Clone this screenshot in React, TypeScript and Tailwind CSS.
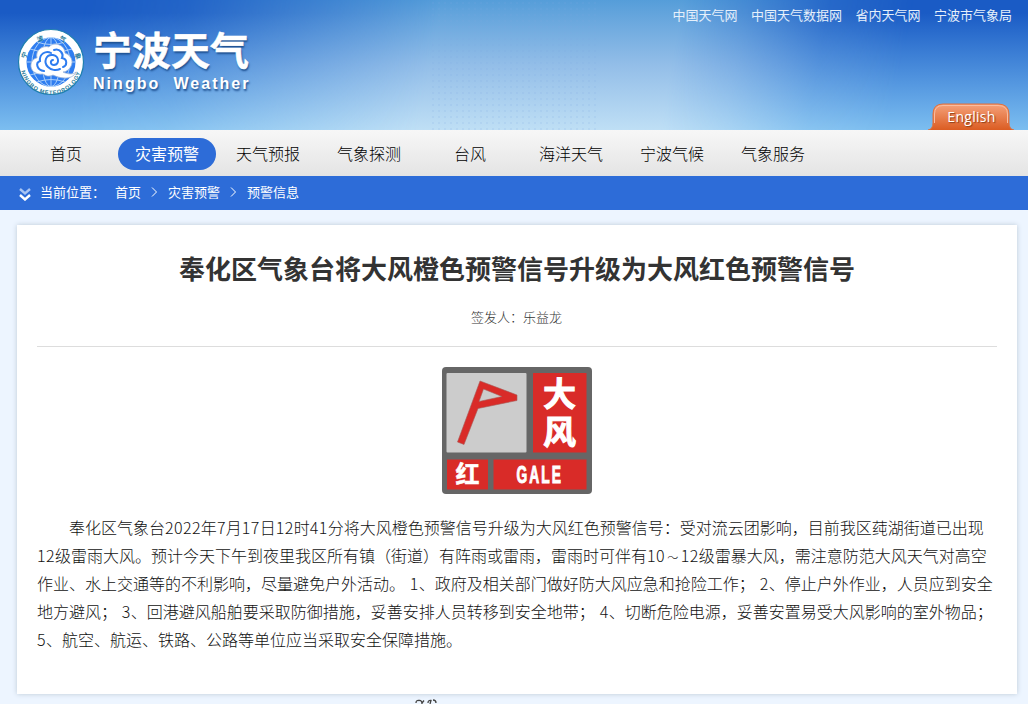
const topLinks = [
  { label: '中国天气网', href: '#' },
  { label: '中国天气数据网', href: '#' },
  { label: '省内天气网', href: '#' },
  { label: '宁波市气象局', href: '#' },
];

const navItems = [
  { label: '首页' },
  { label: '灾害预警', active: true },
  { label: '天气预报' },
  { label: '气象探测' },
  { label: '台风' },
  { label: '海洋天气' },
  { label: '宁波气候' },
  { label: '气象服务' },
];

const crumbs = ['首页', '灾害预警', '预警信息'];

const lines = [
  '奉化区气象台2022年7月17日12时41分将大风橙色预警信号升级为大风红色预警信号：受对流云团影响，目前我区莼湖街道已出现',
  '12级雷雨大风。预计今天下午到夜里我区所有镇（街道）有阵雨或雷雨，雷雨时可伴有10～12级雷暴大风，需注意防范大风天气对高空',
  '作业、水上交通等的不利影响，尽量避免户外活动。 1、政府及相关部门做好防大风应急和抢险工作； 2、停止户外作业，人员应到安全',
  '地方避风； 3、回港避风船舶要采取防御措施，妥善安排人员转移到安全地带； 4、切断危险电源，妥善安置易受大风影响的室外物品；',
  '5、航空、航运、铁路、公路等单位应当采取安全保障措施。',
];

function Logo() {
  return (
    <svg width="68" height="68" viewBox="0 0 68 68">
      <defs>
        <path id="ringTop" d="M8 37 A26 26 0 1 1 60 37" />
        <path id="ringBottom" d="M3.500 36 A30.500 30.500 0 0 0 64.500 36" />
      </defs>
      <circle cx="34" cy="34" r="32.5" fill="#fff" stroke="#1f7fae" strokeWidth="1.2" />
      <circle cx="34" cy="34" r="24.5" fill="#2f7df0" />
      <g fill="none" stroke="#b9d8fb" strokeWidth="0.9">
        <ellipse cx="34" cy="34" rx="9" ry="24.5" />
        <ellipse cx="34" cy="34" rx="19" ry="24.5" />
        <path d="M34 9.500v49M9.500 34h49M13 21q21 7 42 0M13 47q21-7 42 0M20 14q14 5 28 0M20 54q14-5 28 0" />
      </g>
      {/* cloud */}
      <path
        d="M26 46 C18 47 13 42 14 36 C15 32 18 30 20 30 C18 22 26 17 32 19 C37 13 48 17 48 25 C56 28 57 36 52 41 C50 43 48 44 46 44 C50 46 56 47 59 44 C55 53 42 50 36 47 C32 49 29 48 26 46Z"
        fill="#fff"
        stroke="#9db4d8"
        strokeWidth="0.8"
      />
      <path
        d="M36 32 C33 32 33 37 37 37 C43 36 42 28 36 27 C29 26 26 34 31 39 C34 42 39 43 43 41 M27 43 C20 42 18 35 23 33 C22 26 29 22 34 25 M37 22 C43 20 47 26 45 30 C51 31 50 38 46 39"
        fill="none"
        stroke="#2f7df0"
        strokeWidth="2"
        strokeLinecap="round"
      />
      <text fontSize="6.5" fontWeight="700" fill="#1c7898" fontFamily="'Noto Sans CJK SC', sans-serif">
        <textPath href="#ringTop" startOffset="6" textLength="70">
          宁 波 气 象
        </textPath>
      </text>
      <text fontSize="5.500" fontWeight="700" fill="#1c7898" fontFamily="'Liberation Sans', sans-serif">
        <textPath href="#ringBottom" startOffset="7" textLength="80">
          NINGBO METEOROLOGY
        </textPath>
      </text>
    </svg>
  );
}

function GaleSign() {
  return (
    <svg width="150" height="127" viewBox="0 0 150 127">
      <rect width="150" height="127" rx="4" fill="#666" />
      <rect x="4.500" y="6" width="80" height="79.500" rx="1" fill="#ccc" />
      <rect x="91" y="6" width="53.500" height="79.500" fill="#d92b28" />
      <rect x="5" y="92.500" width="41" height="30" fill="#d92b28" />
      <rect x="51.500" y="92.500" width="93" height="30" fill="#d92b28" />
      <path
        fillRule="evenodd"
        fill="#d92b28"
        stroke="#a85a58"
        strokeWidth="0.6"
        d="M38 14 L75 28 V33.500 L36 41.500 L22 77.500 L15.500 75 Z M41.500 22 L37 34.500 L60 29.500 Z"
      />
      <g
        fill="#fff"
        stroke="#fff"
        strokeWidth="1"
        fontFamily="'Noto Sans CJK SC', sans-serif"
        fontWeight="700"
        textAnchor="middle"
      >
        <text x="117.500" y="39" fontSize="33">大</text>
        <text x="117.500" y="77" fontSize="33">风</text>
        <text x="25.500" y="116" fontSize="24" strokeWidth="0.5">红</text>
      </g>
      <text
        x="74"
        y="116"
        fontSize="23"
        fontWeight="700"
        fill="#fff"
        stroke="#fff"
        strokeWidth="1"
        fontFamily="'Liberation Sans', sans-serif"
        transform="translate(75 0) scale(0.6 1) translate(-75 0)"
        letterSpacing="3.500"
      >
        GALE
      </text>
    </svg>
  );
}

function Header() {
  return (
    <header className="relative h-[130px] bg-linear-to-b from-[#1a5bc5] from-10% to-[#7cbef0]">
      <div className="absolute inset-0 bg-linear-to-b from-[#559dd9] via-[#93bee8] to-[#bfdff5] [mask-image:linear-gradient(100deg,transparent_8%,rgba(0,0,0,0.15)_18%,rgba(0,0,0,0.5)_28%,#000_42%,#000_65%,rgba(0,0,0,0.7)_71%,rgba(0,0,0,0.2)_79%,transparent_87%)]" />
      <div className="absolute inset-y-0 left-[430px] w-[170px] bg-[radial-gradient(#7ba6e0_1px,transparent_1.5px)] bg-[size:6px_6px] opacity-15" />
      <div className="relative flex h-full justify-between">
        <div className="flex pt-7 pl-[17px]">
          <Logo />
          <div className="ml-2 text-white [text-shadow:1px_2px_2px_#1d4f8f]">
            <h1 className="-mt-[3px] h-[50px] text-[39px] leading-[46px] font-bold whitespace-nowrap [-webkit-text-stroke:0.5px_white]">
              宁波天气
            </h1>
            <p className="font-['Liberation_Sans'] text-[16px] leading-[18px] font-bold tracking-[2.05px] whitespace-pre">
              Ningbo  Weather
            </p>
          </div>
        </div>
        <div className="flex flex-col items-end justify-between">
          <ul className="flex gap-[13.5px] pt-[5px] pr-4 text-[13px] leading-5 text-[#e6f0fb]">
            {topLinks.map(link => (
              <li key={link.label}>
                <a href={link.href}>{link.label}</a>
              </li>
            ))}
          </ul>
          <a href="#" className="relative mr-[14px] block h-[27px] w-[86px]">
            <svg width="86" height="27" viewBox="0 0 86 27" className="absolute inset-0">
              <defs>
                <linearGradient id="tab" x1="0" y1="0" x2="0" y2="1">
                  <stop offset="0" stopColor="#f5a27b" />
                  <stop offset="1" stopColor="#db5c22" />
                </linearGradient>
              </defs>
              <path d="M0 27 Q5 26 5 20 V11 Q5 1 15 1 H70 Q81 1 81 11 V20 Q81 26 86 27Z" fill="url(#tab)" />
              <path d="M0 27 Q5 26 5 20 V11 Q5 1 15 1 H70 Q81 1 81 11 V20 Q81 26 86 27" fill="none" stroke="#e0703c" />
              <path d="M6.500 20 V11 Q6.500 2.500 15 2.500 H70 Q79.500 2.500 79.500 11 V20" fill="none" stroke="#f9bd9f" />
            </svg>
            <span className="relative block pl-px text-center font-['Open_Sans'] text-[14px] leading-[27px] tracking-[0.3px] text-white [text-shadow:1px_1px_1px_#8c3c16]">
              English
            </span>
          </a>
        </div>
      </div>
    </header>
  );
}

// digits get a little extra tracking, the wave dash is drawn small
function BodyLine({ text }: { text: string }) {
  return (
    <>
      {text.split(/(\d+|～)/).map((part, idx) => {
        if (part === '～') {
          return (
            <span key={idx} className="inline-block w-4 text-center text-[11px] leading-4">
              {part}
            </span>
          );
        }
        return /^\d/.test(part) ? (
          <span key={idx} className="tracking-[0.4px]">
            {part}
          </span>
        ) : (
          part
        );
      })}
    </>
  );
}

export default function App() {
  return (
    <div
      lang="zh-CN"
      className="h-[704px] w-[1028px] overflow-hidden bg-[#edf5ff] font-['Noto_Sans_CJK_SC',sans-serif] text-[#333]"
    >
      <Header />

      <nav className="h-[46px] bg-linear-to-b from-[#f7f7f7] to-[#e4e4e4]">
        <ul className="flex gap-[3px] pt-2 pl-[17px]">
          {navItems.map(item => (
            <li
              key={item.label}
              className={`h-8 w-[98px] rounded-full text-center text-base leading-[30px] ${
                item.active ? 'bg-[#2d6cd8] font-normal text-white' : 'font-light text-black'
              }`}
            >
              {item.label}
            </li>
          ))}
        </ul>
      </nav>

      <div className="flex h-[34px] items-center bg-[#2d6cd8] pl-[19px] text-[13px] text-white">
        <svg width="12" height="13" viewBox="0 0 12 13" fill="none" strokeWidth="2.4" className="mt-[3px]">
          <path d="M1 1 L6 5.500 L11 1" stroke="#a9c5f3" />
          <path d="M1 7 L6 11.500 L11 7" stroke="#fff" />
        </svg>
        <span className="ml-[9px] w-[75px] -translate-y-px">当前位置：</span>
        {crumbs.map((crumb, idx) => (
          <span key={crumb} className="flex -translate-y-px items-center">
            {idx > 0 && (
              <svg width="27" height="10" viewBox="0 0 27 10" fill="none" stroke="#fff">
                <path d="M11 0.500 L15.500 5 L11 9.500" />
              </svg>
            )}
            {crumb}
          </span>
        ))}
      </div>

      <main className="mt-[15px] ml-[17px] h-[469px] w-[1000px] bg-white px-5 shadow-[0_0_5px_#bccad6]">
        <h2 className="pt-[23px] text-center text-[26px] leading-[40px] font-bold">
          奉化区气象台将大风橙色预警信号升级为大风红色预警信号
        </h2>
        <p className="mt-[19px] border-b border-[#ddd] pr-px pb-[19px] text-center text-[13px] leading-5 font-light text-[#333]">
          签发人：乐益龙
        </p>
        <div className="flex justify-center pt-5">
          <GaleSign />
        </div>
        <div className="mt-[19px] text-base leading-7 font-light [word-spacing:1.3px] whitespace-nowrap text-[#111]">
          {lines.map((line, idx) => (
            <p key={idx} className={idx === 0 ? 'h-7 indent-8' : 'h-7'}>
              <BodyLine text={line} />
            </p>
          ))}
        </div>
      </main>

      {/* tops of the footer characters at the fold */}
      <svg width="24" height="5" viewBox="0 0 24 5" className="mt-[5px] ml-[415px]" fill="none" stroke="#444" strokeWidth="1.3">
        <path d="M1 4 Q1 1 4 1.500 Q7 1 7 5 M9 1.500 L7 4 M13 4 Q13 1 16 1.500 L15 5 M18 1 Q21 1 21 4" />
      </svg>
    </div>
  );
}
